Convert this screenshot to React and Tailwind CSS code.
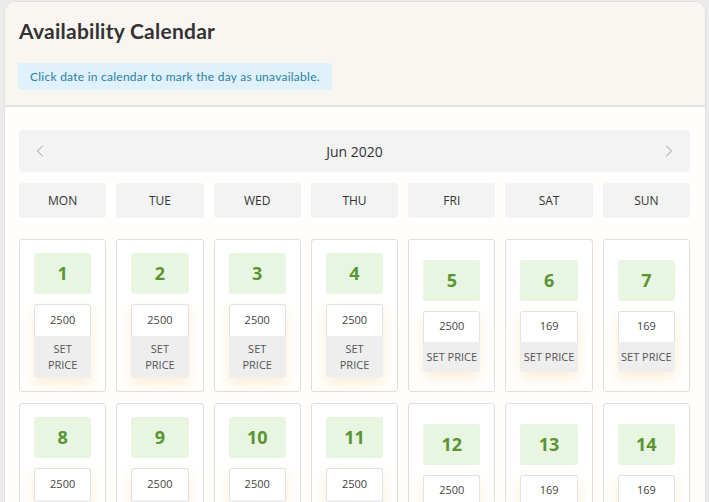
import { ChevronLeft, ChevronRight } from 'lucide-react';

const days = ['MON', 'TUE', 'WED', 'THU', 'FRI', 'SAT', 'SUN'];

const weeks = [
  [
    { day: 1, price: 2500, wrap: true },
    { day: 2, price: 2500, wrap: true },
    { day: 3, price: 2500, wrap: true },
    { day: 4, price: 2500, wrap: true },
    { day: 5, price: 2500 },
    { day: 6, price: 169 },
    { day: 7, price: 169 },
  ],
  [
    { day: 8, price: 2500, wrap: true },
    { day: 9, price: 2500, wrap: true },
    { day: 10, price: 2500, wrap: true },
    { day: 11, price: 2500, wrap: true },
    { day: 12, price: 2500 },
    { day: 13, price: 169 },
    { day: 14, price: 169 },
  ],
];

function DayCell({ cell }) {
  return (
    <div className="h-[153px] border border-[#e0dedb] rounded-[3px] bg-white px-[14px] flex flex-col justify-center">
      <div className="h-[41px] rounded-[3px] bg-[#e8f5e0] flex items-center justify-center text-[18px] font-bold text-[#5a9534]">
        {cell.day}
      </div>
      <div className="mt-[10px] shadow-[0_6px_14px_rgba(245,190,100,0.28)] rounded-[3px]">
        <div
          className={`${cell.wrap ? 'h-[32px]' : 'h-[31px]'} border border-[#e2e2e2] border-b-0 rounded-t-[3px] bg-white flex items-center justify-center text-[11px] text-[#444]`}
        >
          {cell.price}
        </div>
        <div
          className={`${cell.wrap ? 'h-[42px]' : 'h-[30px]'} bg-[#eeeeee] rounded-b-[3px] flex items-center justify-center text-center text-[11px] leading-[16px] text-[#555]`}
        >
          {cell.wrap ? (
            <span>
              SET
              <br />
              PRICE
            </span>
          ) : (
            'SET PRICE'
          )}
        </div>
      </div>
    </div>
  );
}

export default function App() {
  return (
    <div className="min-h-screen bg-[#ebebeb] pl-[4px] pr-[3px] pt-[1px] font-['Open_Sans',sans-serif]">
      <div className="border border-[#e0e0e0] rounded-t-[12px] overflow-hidden bg-[#fffefd]">
        {/* Header */}
        <div className="bg-[#f9f6f2] border-b-2 border-[#e2e2e2] px-[14px] pt-[15px] h-[105px]">
          <h1 className="font-['Lato',sans-serif] font-bold text-[21px] leading-[28px] text-[#333] tracking-[0.25px]">
            Availability Calendar
          </h1>
          <div className="mt-[18px] inline-flex items-center h-[27px] px-[12px] -ml-[1px] rounded-[3px] bg-[#dff1fa] font-['Lato',sans-serif] text-[12px] text-[#2a7fa5] tracking-[0.25px]">
            Click date in calendar to mark the day as unavailable.
          </div>
        </div>

        {/* Body */}
        <div className="pl-[14px] pr-[15px] pt-[23px]">
          <div className="h-[42px] rounded-[4px] bg-[#f3f3f3] flex items-center justify-between px-[11px]">
            <ChevronLeft className="w-[20px] h-[20px] text-[#888]" strokeWidth={1} />
            <span className="text-[14px] font-medium text-[#333]">Jun 2020</span>
            <ChevronRight className="w-[20px] h-[20px] text-[#888]" strokeWidth={1} />
          </div>

          <div className="grid grid-cols-7 gap-[10px] mt-[11px]">
            {days.map((d) => (
              <div
                key={d}
                className="h-[35px] rounded-[3px] bg-[#f3f3f3] flex items-center justify-center text-[12px] font-medium text-[#333]"
              >
                {d}
              </div>
            ))}
          </div>

          <div className="mt-[21px] flex flex-col gap-[11px]">
            {weeks.map((week, i) => (
              <div key={i} className="grid grid-cols-7 gap-[10px]">
                {week.map((cell) => (
                  <DayCell key={cell.day} cell={cell} />
                ))}
              </div>
            ))}
          </div>
        </div>
      </div>
    </div>
  );
}
